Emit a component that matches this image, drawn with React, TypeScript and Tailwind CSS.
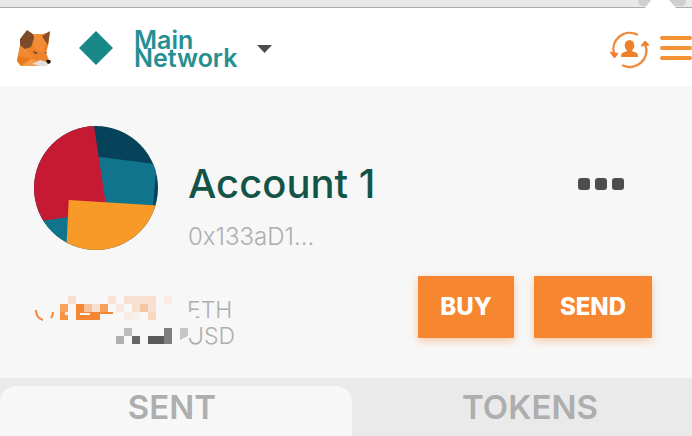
import React from "react";

const blocks: [number, number, string][] = [
  [34, 2, "#f9dfcf"], [74, 2, "#f9e2d4"], [90, 2, "#f9dfcf"], [98, 2, "#f9dfcf"], [106, 2, "#f9dfcf"], [114, 2, "#f9dfcf"], [130, 2, "#faeae2"],
  [26, 10, "#f8a35e"], [42, 10, "#f58634"], [50, 10, "#f8c19a"], [58, 10, "#f8dfd0"], [66, 10, "#f8a05b"], [82, 10, "#f9e9e0"], [98, 10, "#f9dfd0"], [106, 10, "#f6c6a4"], [114, 10, "#f9e0d2"],
  [26, 18, "#f7933f"], [42, 18, "#f58634"], [50, 18, "#f58634"], [58, 18, "#f58634"], [90, 18, "#f8ede6"], [98, 18, "#f8f0eb"], [114, 18, "#f8d5bb"],
  [90, 34, "#bcbcbc"], [82, 42, "#b0b0b0"], [98, 42, "#666666"], [114, 42, "#595959"], [122, 42, "#595959"], [130, 42, "#7f7f7f"], [130, 34, "#7f7f7f"], [146, 34, "#c6c6c6"],
];

function Fox() {
  return (
    <svg width="36" height="38" viewBox="0 0 36 38" aria-hidden="true">
      <path d="M5 12 L18 5 H27 L34 3 L32 17 L30 24 L33 31 L31 36 L16 37 L5 37 L1 32 L3 21Z" fill="#ee822a" />
      <path d="M18 5 L27 5 L30 14 L26 24 L18 18Z" fill="#f48c34" />
      <path d="M4 18 L10 20 L17 29 L2 27Z" fill="#f28a32" />
      <path d="M1 32 L2 27 L15 30 L16 36 L5 37Z" fill="#e9781f" />
      <path d="M5 37 L15 30 L24 33 L16 37Z" fill="#f69a48" />
      <path d="M11 1 L17 5 L18 9 L15 18 L9 20 L4 16 L4 10Z" fill="#7d4b29" />
      <path d="M34 2 L32 16 L29 12 L26 7Z" fill="#8a4d27" />
      <path d="M16 35 L24 31 L31 33 L31 37 L25 37Z" fill="#e4ddd9" />
      <path d="M17 22 L22 24 L20 25 L18 24Z M29 23 L31 23 L30 25Z" fill="#59402f" />
      <path d="M30 31 L34 31 L35 33 L33 35 L31 34Z" fill="#171515" />
    </svg>
  );
}

function SwitchAccount() {
  return (
    <svg width="40" height="38" viewBox="0 0 40 38" aria-hidden="true">
      <g fill="none" stroke="#ef8b3c" strokeWidth="2.4" strokeLinecap="round">
        <path d="M27 3.500 A16.500 16.500 0 0 0 4 23" />
        <path d="M13 34.500 A16.500 16.500 0 0 0 35.500 14" />
      </g>
      <path d="M0 21 L8 22.500 L4.500 27Z M31 15 L35 10 L39 14Z" fill="#ee8132" stroke="#ee8132" strokeLinejoin="round" />
      <ellipse cx="19.500" cy="14.500" rx="4.800" ry="5.500" fill="#f08028" />
      <path d="M17 18 H22 V20 L27 22 Q28 23 28 26 H11 Q11 23 12 22 L17 20Z" fill="#f08028" />
    </svg>
  );
}

function Identicon() {
  return (
    <svg className="shrink-0" width="124" height="124" viewBox="0 0 124 124" role="img" aria-label="Account 1 avatar">
      <clipPath id="disc"><circle cx="62" cy="62" r="62" /></clipPath>
      <g clipPath="url(#disc)">
        <rect width="124" height="124" fill="#07425b" />
        <path d="M64 30.700 L122.700 38.200 L119 80 H64Z" fill="#10758c" />
        <path d="M0 90 H36 V124 H0Z" fill="#10758c" />
        <path d="M0 0 H60 L71.700 77 L34 91 L0 96Z" fill="#c61934" />
        <path d="M34.700 74 L124 79.500 V124 H32.300Z" fill="#f89a28" />
      </g>
    </svg>
  );
}

export default function App() {
  return (
    <main className="bg-[#f7f7f7] font-['Inter',sans-serif]">
      <div className="flex h-2 justify-end border-b border-[#acacac] bg-[#e8e8e8] pr-1">
        <svg width="50" height="8" viewBox="0 0 50 8" aria-hidden="true">
          <path d="M0 0 H48 Q48 6 43 6 H5 Q0 6 0 0Z" fill="#cfcfcf" />
          <path d="M7 8 L13 0 H31 L38 8Z" fill="#fff" />
        </svg>
      </div>
      <header className="flex h-[78px] items-center bg-white pt-0.5 pl-4">
        <Fox />
        <div className="ml-7 flex size-8 items-center justify-center">
          <div className="size-6 shrink-0 rotate-45 bg-[#178787]" />
        </div>
        <button type="button" className="ml-[22px] flex items-center gap-5 pt-0.5 text-left text-[25px]/[18px] font-semibold text-[#258f92]">
          <span>Main<br />Network</span>
          <svg width="15" height="8" viewBox="0 0 15 8" aria-hidden="true"><path d="M0 0 H15 L7.500 8Z" fill="#4d4d4d" /></svg>
        </button>
        <button type="button" aria-label="Switch account" className="ml-auto pt-1"><SwitchAccount /></button>
        <button type="button" aria-label="Menu" className="ml-[10px] flex w-8 flex-col gap-[6px]">
          <span className="h-1 rounded-full bg-[#f59133]" />
          <span className="h-1 rounded-full bg-[#f59133]" />
          <span className="h-1 rounded-full bg-[#f59133]" />
        </button>
      </header>
      <section className="px-[34px] pt-10 pb-[29px]">
        <div className="flex gap-[30px]">
          <Identicon />
          <div className="flex-1 pt-9">
            <div className="flex items-center justify-between pr-[34px]">
              <h1 className="text-[40px]/[44px] font-medium text-[#135447]">Account 1</h1>
              <button type="button" aria-label="Account options" className="flex gap-[5px]">
                <span className="size-3 rounded-[3px] bg-[#4d4d4d]" />
                <span className="size-3 rounded-[3px] bg-[#4d4d4d]" />
                <span className="size-3 rounded-[3px] bg-[#4d4d4d]" />
              </button>
            </div>
            <p className="pt-4 text-2xl/[30px] font-light text-[#aeaeae]">0x133aD1...</p>
          </div>
        </div>
        <div className="flex justify-between pt-6 pr-[6px]">
          <div className="relative pt-[21px] pl-[153px] text-[23px]/[26px] font-light text-[#aeaeae]">
            <p>ETH</p>
            <p>USD</p>
            <svg className="absolute top-[18px] left-0" width="180" height="56" viewBox="0 0 180 56" shapeRendering="crispEdges" aria-hidden="true">
              <path d="M152 18 H162 V25 H152Z M152 32 H163 V37 L159 45 L152 42Z" fill="#f7f7f7" />
              {blocks.map(([x, y, fill]) => <rect key={`${x}-${y}`} x={x} y={y} width="8" height="8" fill={fill} />)}
              <path d="M146 42 H154 L146 46Z" fill="#c6c6c6" />
              <path d="M31 18 H40 V21 H31Z M46 19 H56 V21 H46Z" fill="#f7f7f7" />
              <g fill="none" stroke="#f58634" strokeWidth="2" shapeRendering="auto">
                <path d="M2 16 Q2 24 9 26 M17 24 Q19 22 19 18 M64 19 H79" />
              </g>
            </svg>
          </div>
          <div className="flex gap-5">
            <button type="button" className="h-[62px] w-24 bg-[#f68630] text-2xl font-extrabold text-white shadow-[0_3px_8px_#f6863066]">BUY</button>
            <button type="button" className="h-[62px] w-[118px] bg-[#f68630] text-2xl font-extrabold text-white shadow-[0_3px_8px_#f6863066]">SEND</button>
          </div>
        </div>
      </section>
      <div role="tablist" className="grid grid-cols-[352fr_340fr] bg-[#eaeaea] pt-2 text-[33px]/[42px] font-semibold text-[#aeaeae]">
        <button type="button" role="tab" aria-selected="true" className="h-[50px] rounded-t-2xl bg-[#f7f7f7] pr-2 pb-2">SENT</button>
        <button type="button" role="tab" aria-selected="false" className="h-[50px] pb-2 pl-4">TOKENS</button>
      </div>
    </main>
  );
}
